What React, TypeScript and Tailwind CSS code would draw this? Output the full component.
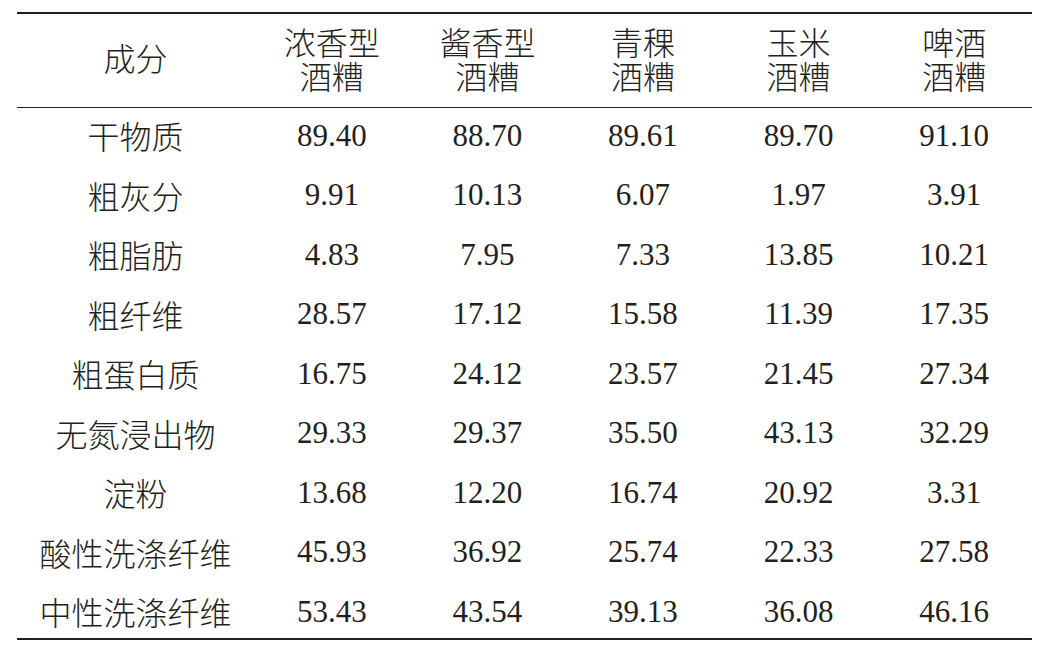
import React from "react";

const headers: string[][] = [
  ["浓香型", "酒糟"],
  ["酱香型", "酒糟"],
  ["青稞", "酒糟"],
  ["玉米", "酒糟"],
  ["啤酒", "酒糟"],
];

const rows: [string, string[]][] = [
  ["干物质", ["89.40", "88.70", "89.61", "89.70", "91.10"]],
  ["粗灰分", ["9.91", "10.13", "6.07", "1.97", "3.91"]],
  ["粗脂肪", ["4.83", "7.95", "7.33", "13.85", "10.21"]],
  ["粗纤维", ["28.57", "17.12", "15.58", "11.39", "17.35"]],
  ["粗蛋白质", ["16.75", "24.12", "23.57", "21.45", "27.34"]],
  ["无氮浸出物", ["29.33", "29.37", "35.50", "43.13", "32.29"]],
  ["淀粉", ["13.68", "12.20", "16.74", "20.92", "3.31"]],
  ["酸性洗涤纤维", ["45.93", "36.92", "25.74", "22.33", "27.58"]],
  ["中性洗涤纤维", ["53.43", "43.54", "39.13", "36.08", "46.16"]],
];

function Cjk({ children, className = "" }: { children: React.ReactNode; className?: string }) {
  return (
    <div className={`font-['Noto_Sans_CJK_SC',sans-serif] font-light text-[32px] text-center ${className}`}>
      {children}
    </div>
  );
}

function Num({ children }: { children: React.ReactNode }) {
  return (
    <div className="font-[Liberation_Serif,Times_New_Roman,serif] text-[31px] text-center leading-none">
      {children}
    </div>
  );
}

export default function App() {
  return (
    <div className="w-[1053px] h-[657px] bg-white text-[#231f20] pt-[12px] pl-[17px]">
      <div className="w-[1015px]">
        <div className="h-[2px] bg-[#231f20]" />
        <div className="grid grid-cols-[237px_repeat(5,1fr)] h-[93px] items-center pb-[6px]">
          <Cjk className="leading-[35px]">成分</Cjk>
          {headers.map((h, i) => (
            <Cjk key={i} className="leading-[34px] flex flex-col">
              <span>{h[0]}</span>
              <span>{h[1]}</span>
            </Cjk>
          ))}
        </div>
        <div className="h-[1px] bg-[#231f20]" />
        <div className="flex flex-col gap-[5.5px]">
          {rows.map(([name, vals], i) => (
            <div key={i} className="grid grid-cols-[237px_repeat(5,1fr)] h-[54px] items-center">
              <Cjk className="leading-none">{name}</Cjk>
              {vals.map((v, j) => (
                <Num key={j}>{v}</Num>
              ))}
            </div>
          ))}
        </div>
        <div className="h-[2px] bg-[#231f20]" />
      </div>
    </div>
  );
}
